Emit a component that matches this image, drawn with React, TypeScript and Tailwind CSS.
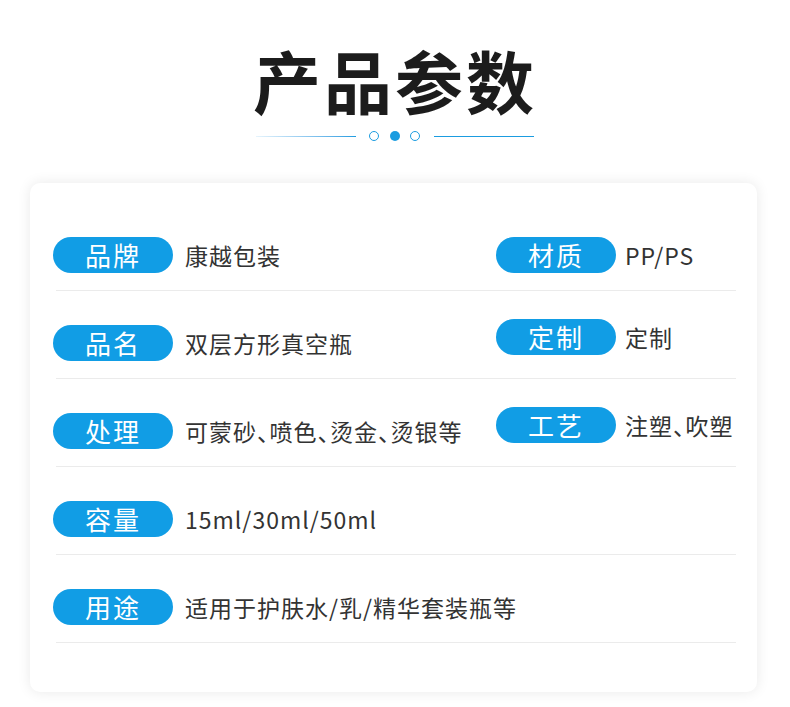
import React from 'react';

type Cell = { label: string; value: string };

const rows: { left: Cell; right?: Cell }[] = [
  { left: { label: '品牌', value: '康越包装' }, right: { label: '材质', value: 'PP/PS' } },
  { left: { label: '品名', value: '双层方形真空瓶' }, right: { label: '定制', value: '定制' } },
  { left: { label: '处理', value: '可蒙砂、喷色、烫金、烫银等' }, right: { label: '工艺', value: '注塑、吹塑' } },
  { left: { label: '容量', value: '15ml/30ml/50ml' } },
  { left: { label: '用途', value: '适用于护肤水/乳/精华套装瓶等' } },
];

const Item = ({ cell, right, shift }: { cell: Cell; right?: boolean; shift?: boolean }) => (
  <div className={`flex items-center ${shift ? '-translate-y-1.5' : ''}`}>
    <span className="flex h-[36px] w-[120px] shrink-0 items-center justify-center rounded-full bg-[#119de5] text-[26px] leading-none tracking-[2px] text-white">
      {cell.label}
    </span>
    <span
      className={`${right ? 'ml-[9px]' : 'ml-[12px]'} whitespace-nowrap text-[23px] leading-none tracking-[1px] text-[#333333] [font-feature-settings:'halt']`}
    >
      {cell.value}
    </span>
  </div>
);

export default function App() {
  return (
    <div className="min-h-[707px] w-[790px] bg-white font-['Noto_Sans_CJK_SC','Noto_Sans',sans-serif]">
      <div className="flex flex-col items-center pt-[46px]">
        <h1 className="text-[68px] font-bold leading-none tracking-[3px] text-[#1c1c1c]">产品参数</h1>
        <div className="mt-[17px] flex items-center">
          <div className="h-px w-[100px] bg-gradient-to-r from-[#e6f4fc] to-[#1b9ce0]" />
          <div className="ml-[13px] h-[10px] w-[10px] rounded-full border-[1.5px] border-[#1b9ce0]" />
          <div className="ml-[11px] h-[10px] w-[10px] rounded-full bg-[#1b9ce0]" />
          <div className="ml-[10px] h-[10px] w-[10px] rounded-full border-[1.5px] border-[#1b9ce0]" />
          <div className="ml-[14px] h-px w-[100px] bg-[#1b9ce0]" />
        </div>
      </div>

      <div className="ml-[30px] mt-[42px] h-[509px] w-[727px] rounded-[10px] bg-white pl-[26px] pr-[21px] pt-[54px] shadow-[0_0_14px_rgba(0,0,0,0.09)]">
        {rows.map((row, i) => (
          <div
            key={i}
            className="mb-[34px] grid grid-cols-[440px_1fr] border-b border-[#ebebeb] pb-[17px] [&>*:first-child]:-ml-[3px]"
          >
            <Item cell={row.left} />
            {row.right && <Item cell={row.right} right shift={i > 0} />}
          </div>
        ))}
      </div>
    </div>
  );
}
